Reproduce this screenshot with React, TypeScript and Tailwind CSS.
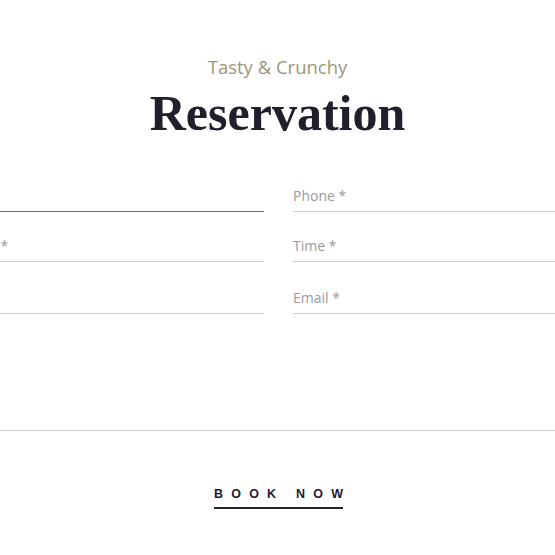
import type { ReactNode } from "react";

const cx = (...parts: (string | false | undefined)[]): string => parts.filter(Boolean).join(" ");

function Field({ label, active, className }: { label?: string; active?: boolean; className?: string }) {
  return (
    <div
      className={cx(
        "flex h-[40px] items-end border-b pb-[5px]",
        active ? "border-[#6b6b6b]" : "border-[#cfcfcf]",
        className,
      )}
    >
      {label && <span className="text-[14px] leading-5 text-[#9a9a9a]">{label}</span>}
    </div>
  );
}

function Row({ children, className }: { children: ReactNode; className?: string }) {
  return <div className={cx("grid grid-cols-2 gap-x-[29px]", className)}>{children}</div>;
}

export default function App() {
  return (
    <div className="min-h-[555px] w-[555px] overflow-hidden bg-white font-['Open_Sans',sans-serif]">
      <div className="pt-[55px] text-center">
        <p className="text-[18.5px] leading-6 text-[#a0957a]">Tasty &amp; Crunchy</p>
        <h1 className="mt-[6px] font-['Liberation_Serif',serif] text-[50px] font-bold leading-[56px] text-[#20202c]">
          Reservation
        </h1>
      </div>

      <div className="mt-[31px] flex justify-center">
        <div className="w-[625px] shrink-0 translate-x-[1px]">
          <Row>
            <Field active />
            <Field label="Phone *" />
          </Row>
          <Row className="mt-[10px]">
            <Field label="Date *" />
            <Field label="Time *" />
          </Row>
          <Row className="mt-[12px]">
            <Field />
            <Field label="Email *" />
          </Row>
          <div className="mt-[17px] h-[100px] border-b border-[#cfcfcf]" />
        </div>
      </div>

      <div className="mt-[55px] flex justify-center">
        <span className="inline-block translate-x-[1px] border-b-2 border-[#23233a] pb-[5px] font-['Liberation_Sans',sans-serif] text-[12.5px] font-bold leading-4 text-[#1c1c35]">
          <span className="tracking-[8.2px]">BOOK NO</span>W
        </span>
      </div>
    </div>
  );
}
